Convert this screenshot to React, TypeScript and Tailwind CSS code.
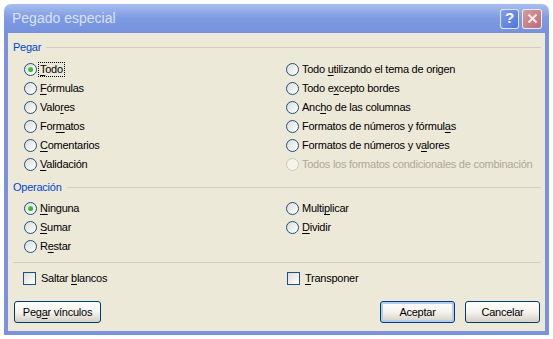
import React from "react";

const font = { fontFamily: '"Liberation Sans", Arial, sans-serif' };

function U({ text, at }: { text: string; at: number }) {
  return (
    <>
      {text.slice(0, at)}
      <span className="underline underline-offset-[2px]">{text[at]}</span>
      {text.slice(at + 1)}
    </>
  );
}

function Radio({
  text,
  at,
  checked,
  disabled,
  focus,
}: {
  text: string;
  at?: number;
  checked?: boolean;
  disabled?: boolean;
  focus?: boolean;
}) {
  return (
    <div className="flex h-[19px] items-center whitespace-nowrap">
      <span
        className={
          disabled
            ? "flex h-[13px] w-[13px] shrink-0 items-center justify-center rounded-full border border-[#cac8bb] bg-[#f5f4ea]"
            : "flex h-[13px] w-[13px] shrink-0 items-center justify-center rounded-full border border-[#1c5180] bg-gradient-to-br from-[#dcdcd7] to-white"
        }
      >
        {checked && (
          <span className="h-[5px] w-[5px] rounded-full bg-gradient-to-br from-[#55d551] to-[#21a121]" />
        )}
      </span>
      <span
        className={
          (disabled ? "text-[#aca899] " : "text-black ") +
          (focus ? "ml-[1px] border border-dotted border-black px-[1px] leading-[13px]" : "ml-[3px]")
        }
      >
        {at === undefined ? text : <U text={text} at={at} />}
      </span>
    </div>
  );
}

function Check({ text, at }: { text: string; at: number }) {
  return (
    <div className="flex h-[16px] items-center whitespace-nowrap">
      <span className="h-[13px] w-[13px] shrink-0 border border-[#1c5180] bg-gradient-to-br from-[#dcdcd7] to-white" />
      <span className="ml-[5px] text-black">
        <U text={text} at={at} />
      </span>
    </div>
  );
}

function Group({ title }: { title: string }) {
  return (
    <div className="flex h-[14px] items-center gap-[5px]">
      <span className="text-[#0046d5]">{title}</span>
      <span className="h-px flex-1 bg-[#d0d0bf]" />
    </div>
  );
}

function Btn({ children, def, w }: { children: React.ReactNode; def?: boolean; w: string }) {
  return (
    <div
      className={
        w +
        " flex h-[22px] items-center justify-center rounded-[3px] border border-[#003c74] bg-gradient-to-b from-white via-[#f4f3ee] to-[#d6d0c5] text-black" +
        (def ? " shadow-[inset_0_0_0_2px_#b4cbf2]" : "")
      }
    >
      {children}
    </div>
  );
}

export default function App() {
  return (
    <div className="h-[339px] w-[553px] bg-white pl-[4px] pt-[4px] text-[11px] tracking-[-0.25px]" style={font}>
      <div className="flex h-[331px] w-[545px] flex-col">
        {/* Title bar */}
        <div className="flex h-[29px] shrink-0 items-center rounded-t-[7px] bg-gradient-to-b from-[#a9bdf0] via-[#7d9ae2] to-[#7792dd] pl-[8px] pr-[7px]">
          <span className="flex-1 text-[14px] tracking-normal text-[#d8e2f7]">Pegado especial</span>
          <div className="flex h-[20px] w-[19px] items-center justify-center rounded-[3px] border border-white/80 bg-gradient-to-br from-[#7f9ff0] to-[#4e73dc] text-[15px] font-bold text-white">
            ?
          </div>
          <div className="ml-[3px] flex h-[20px] w-[20px] items-center justify-center rounded-[3px] border border-white/80 bg-gradient-to-br from-[#d69b9b] to-[#b46e7a]">
            <svg width="11" height="11" viewBox="0 0 11 11">
              <path d="M1.5 1.5 L9.5 9.5 M9.5 1.5 L1.5 9.5" stroke="#f4eaea" strokeWidth="2" />
            </svg>
          </div>
        </div>

        {/* Body */}
        <div className="flex flex-1 flex-col border-x-4 border-b-4 border-[#7b93dc] bg-[#ece9d8] pl-[5px] pr-[4px] pt-[7px]">
          <Group title="Pegar" />
          <div className="mt-[6px] grid grid-cols-[262px_1fr] pl-[11px]">
            <div className="flex flex-col">
              <Radio text="Todo" at={0} checked focus />
              <Radio text="Fórmulas" at={0} />
              <Radio text="Valores" at={4} />
              <Radio text="Formatos" at={3} />
              <Radio text="Comentarios" at={0} />
              <Radio text="Validación" at={0} />
            </div>
            <div className="flex flex-col">
              <Radio text="Todo utilizando el tema de origen" at={5} />
              <Radio text="Todo excepto bordes" at={6} />
              <Radio text="Ancho de las columnas" at={3} />
              <Radio text="Formatos de números y fórmulas" at={28} />
              <Radio text="Formatos de números y valores" at={23} />
              <Radio text="Todos los formatos condicionales de combinación" disabled />
            </div>
          </div>

          <div className="mt-[6px]">
            <Group title="Operación" />
          </div>
          <div className="mt-[5px] grid grid-cols-[262px_1fr] pl-[11px]">
            <div className="flex flex-col">
              <Radio text="Ninguna" at={0} checked />
              <Radio text="Sumar" at={0} />
              <Radio text="Restar" at={1} />
            </div>
            <div className="flex flex-col">
              <Radio text="Multiplicar" at={5} />
              <Radio text="Dividir" at={0} />
            </div>
          </div>

          <div className="mt-[6px] h-px bg-[#d0d0bf]" />

          <div className="mt-[7px] grid grid-cols-[264px_1fr] pl-[10px]">
            <Check text="Saltar blancos" at={7} />
            <Check text="Transponer" at={0} />
          </div>

          <div className="mt-[15px] flex items-center pl-[1px] pr-[1px]">
            <Btn w="w-[87px]">
              <U text="Pegar vínculos" at={3} />
            </Btn>
            <div className="flex-1" />
            <Btn w="w-[75px]" def>
              Aceptar
            </Btn>
            <div className="w-[10px]" />
            <Btn w="w-[75px]">Cancelar</Btn>
          </div>
        </div>
      </div>
    </div>
  );
}
